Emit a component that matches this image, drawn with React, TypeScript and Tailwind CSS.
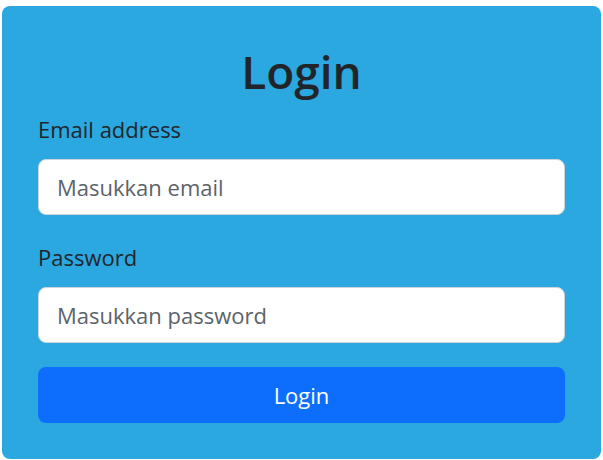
export default function App() {
  return (
    <div className="min-h-[460px] bg-white px-[2px] pt-[6px] font-['Open_Sans',sans-serif]">
      <div className="w-[599px] rounded-[8px] bg-[#2ba8e0] px-[36px] pb-[36px] pt-[38px]">
        <h1 className="mb-[15px] text-center text-[46px] font-semibold leading-[1.2] text-[#212529]">Login</h1>
        <form onSubmit={(e) => e.preventDefault()}>
          <label htmlFor="email" className="mb-[15px] block text-[22px] leading-[30px] text-[#212529]">
            Email address
          </label>
          <input
            id="email"
            type="email"
            placeholder="Masukkan email"
            className="mb-[27px] block h-[56px] w-full rounded-[8px] border border-[#ced4da] bg-white px-[18px] text-[22px] text-[#212529] outline-none placeholder:text-[#5c636a]"
          />
          <label htmlFor="password" className="mb-[15px] block text-[22px] leading-[30px] text-[#212529]">
            Password
          </label>
          <input
            id="password"
            type="password"
            placeholder="Masukkan password"
            className="mb-[24px] block h-[56px] w-full rounded-[8px] border border-[#ced4da] bg-white px-[18px] text-[22px] text-[#212529] outline-none placeholder:text-[#5c636a]"
          />
          <button
            type="submit"
            className="block h-[56px] w-full rounded-[8px] bg-[#0d6efd] text-[22px] text-white"
          >
            Login
          </button>
        </form>
      </div>
    </div>
  );
}
